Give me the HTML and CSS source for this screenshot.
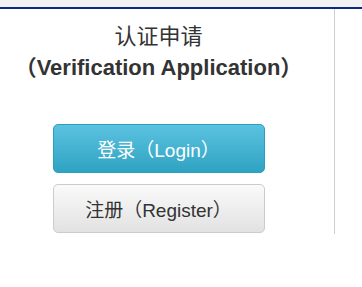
FILE: index.html
```html
<!DOCTYPE html>
<html lang="zh-CN">
<head>
    <meta charset="UTF-8">
    <meta name="viewport" content="width=device-width, initial-scale=1.0">
    <title>认证申请</title>
    <link rel="stylesheet" href="styles.css">
</head>
<body>
    <div class="topbar"></div>
    <div class="page">
        <div class="main">
            <h2 class="title">认证申请<br><b>（Verification Application）</b></h2>
            <div class="actions">
                <button class="btn btn-info">登录（Login）</button>
                <button class="btn btn-default">注册（Register）</button>
            </div>
        </div>
    </div>
</body>
</html>
```

FILE: styles.css
```css
body {
    margin: 0;
    font-family: "Liberation Sans", Arial, "Noto Sans CJK SC", sans-serif;
    color: #333;
    background-color: #fff;
}

.topbar {
    height: 7px;
    background-color: #f2f2f2;
    border-bottom: 2px solid #0c2a82;
}

.page {
    display: flex;
}

.main {
    width: 317px;
    padding-right: 17px;
    border-right: 1px solid #cfcfcf;
    height: 225px;
}

.title {
    margin: 12px 0 0;
    font-size: 22px;
    font-weight: normal;
    line-height: 31px;
    text-align: center;
}

.title b {
    font-weight: bold;
}

.actions {
    display: flex;
    flex-direction: column;
    align-items: center;
    gap: 11px;
    margin-top: 41px;
}

.btn {
    width: 212px;
    height: 49px;
    font-family: inherit;
    font-size: 19px;
    border-radius: 5px;
    cursor: pointer;
}

.btn-info {
    color: #fff;
    background-image: linear-gradient(#5bc2e0, #2fa3c2);
    border: 1px solid #2b9fc0;
}

.btn-default {
    color: #333;
    background-image: linear-gradient(#fafafa, #e2e2e2);
    border: 1px solid #cccccc;
}
```
